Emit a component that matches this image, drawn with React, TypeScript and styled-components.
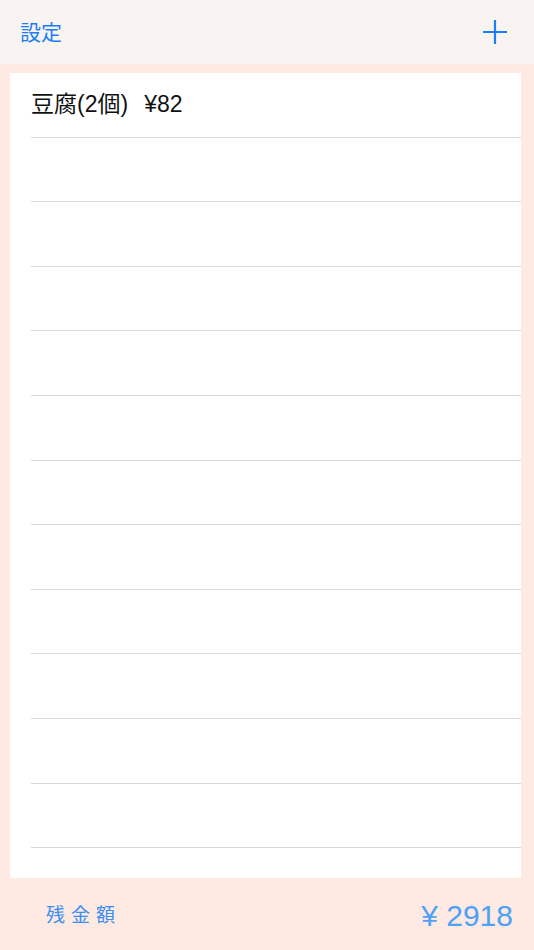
import styled, { createGlobalStyle } from 'styled-components'

const GlobalStyle = createGlobalStyle`
  html, body {
    margin: 0;
    padding: 0;
    background: #fde9e3;
  }
  body {
    font-family: "Liberation Sans", "Noto Sans CJK JP", sans-serif;
  }
`

const Screen = styled.div`
  width: 534px;
  height: 950px;
  display: flex;
  flex-direction: column;
  background: #fee9e3;
  overflow: hidden;
`

const NavBar = styled.div`
  height: 64px;
  flex-shrink: 0;
  background: #f9f3f1;
  display: flex;
  align-items: center;
  justify-content: space-between;
  padding: 0 26px 0 20px;
  box-sizing: border-box;
`

const NavButton = styled.span`
  font-family: "Noto Sans CJK JP", sans-serif;
  font-size: 21px;
  color: #1a7ff6;
  line-height: 1;
  margin-top: -1px;
`

const AddButton = styled.button`
  border: none;
  background: none;
  padding: 0;
  width: 26px;
  height: 26px;
  display: flex;
  align-items: center;
  justify-content: center;
  margin-top: -1px;
`

const ListCard = styled.div`
  margin: 9px 13px 0 10px;
  height: 805px;
  background: #ffffff;
  overflow: hidden;
`

const Row = styled.div`
  height: 63.6px;
  margin-left: 21px;
  border-bottom: 1px solid #d8d8d8;
  display: flex;
  align-items: center;
`

const ItemText = styled.div`
  font-family: "Liberation Sans", "Noto Sans CJK JP", sans-serif;
  font-size: 23px;
  line-height: 30px;
  color: #111111;
  margin-top: -1px;
  display: flex;
  gap: 16px;
  white-space: pre;
`

const Footer = styled.div`
  flex: 1;
  display: flex;
  align-items: center;
  justify-content: space-between;
  padding: 0 21px 2px 46px;
`

const BalanceLabel = styled.span`
  font-family: "Noto Sans CJK JP", sans-serif;
  font-size: 19px;
  letter-spacing: 6px;
  color: #3a8ff0;
`

const BalanceValue = styled.span`
  font-family: "Liberation Sans", "Noto Sans CJK JP", sans-serif;
  font-size: 30px;
  color: #4da2f6;
  margin-top: 6px;
`

type Item = { name: string; price: number }

const items: (Item | null)[] = [
  { name: '豆腐(2個)', price: 82 },
  null, null, null, null, null, null, null, null, null, null, null, null,
]

export default function App() {
  return (
    <>
      <GlobalStyle />
      <Screen>
        <NavBar>
          <NavButton>設定</NavButton>
          <AddButton>
            <svg width="26" height="26" viewBox="0 0 26 26">
              <path d="M13 1v24M1 13h24" stroke="#1a7ff6" strokeWidth="2.2" fill="none" />
            </svg>
          </AddButton>
        </NavBar>
        <ListCard>
          {items.map((item, i) => (
            <Row key={i}>
              {item && (
                <ItemText>
                  <span>{item.name}</span>
                  <span>¥{item.price}</span>
                </ItemText>
              )}
            </Row>
          ))}
        </ListCard>
        <Footer>
          <BalanceLabel>残金額</BalanceLabel>
          <BalanceValue>¥ 2918</BalanceValue>
        </Footer>
      </Screen>
    </>
  )
}
